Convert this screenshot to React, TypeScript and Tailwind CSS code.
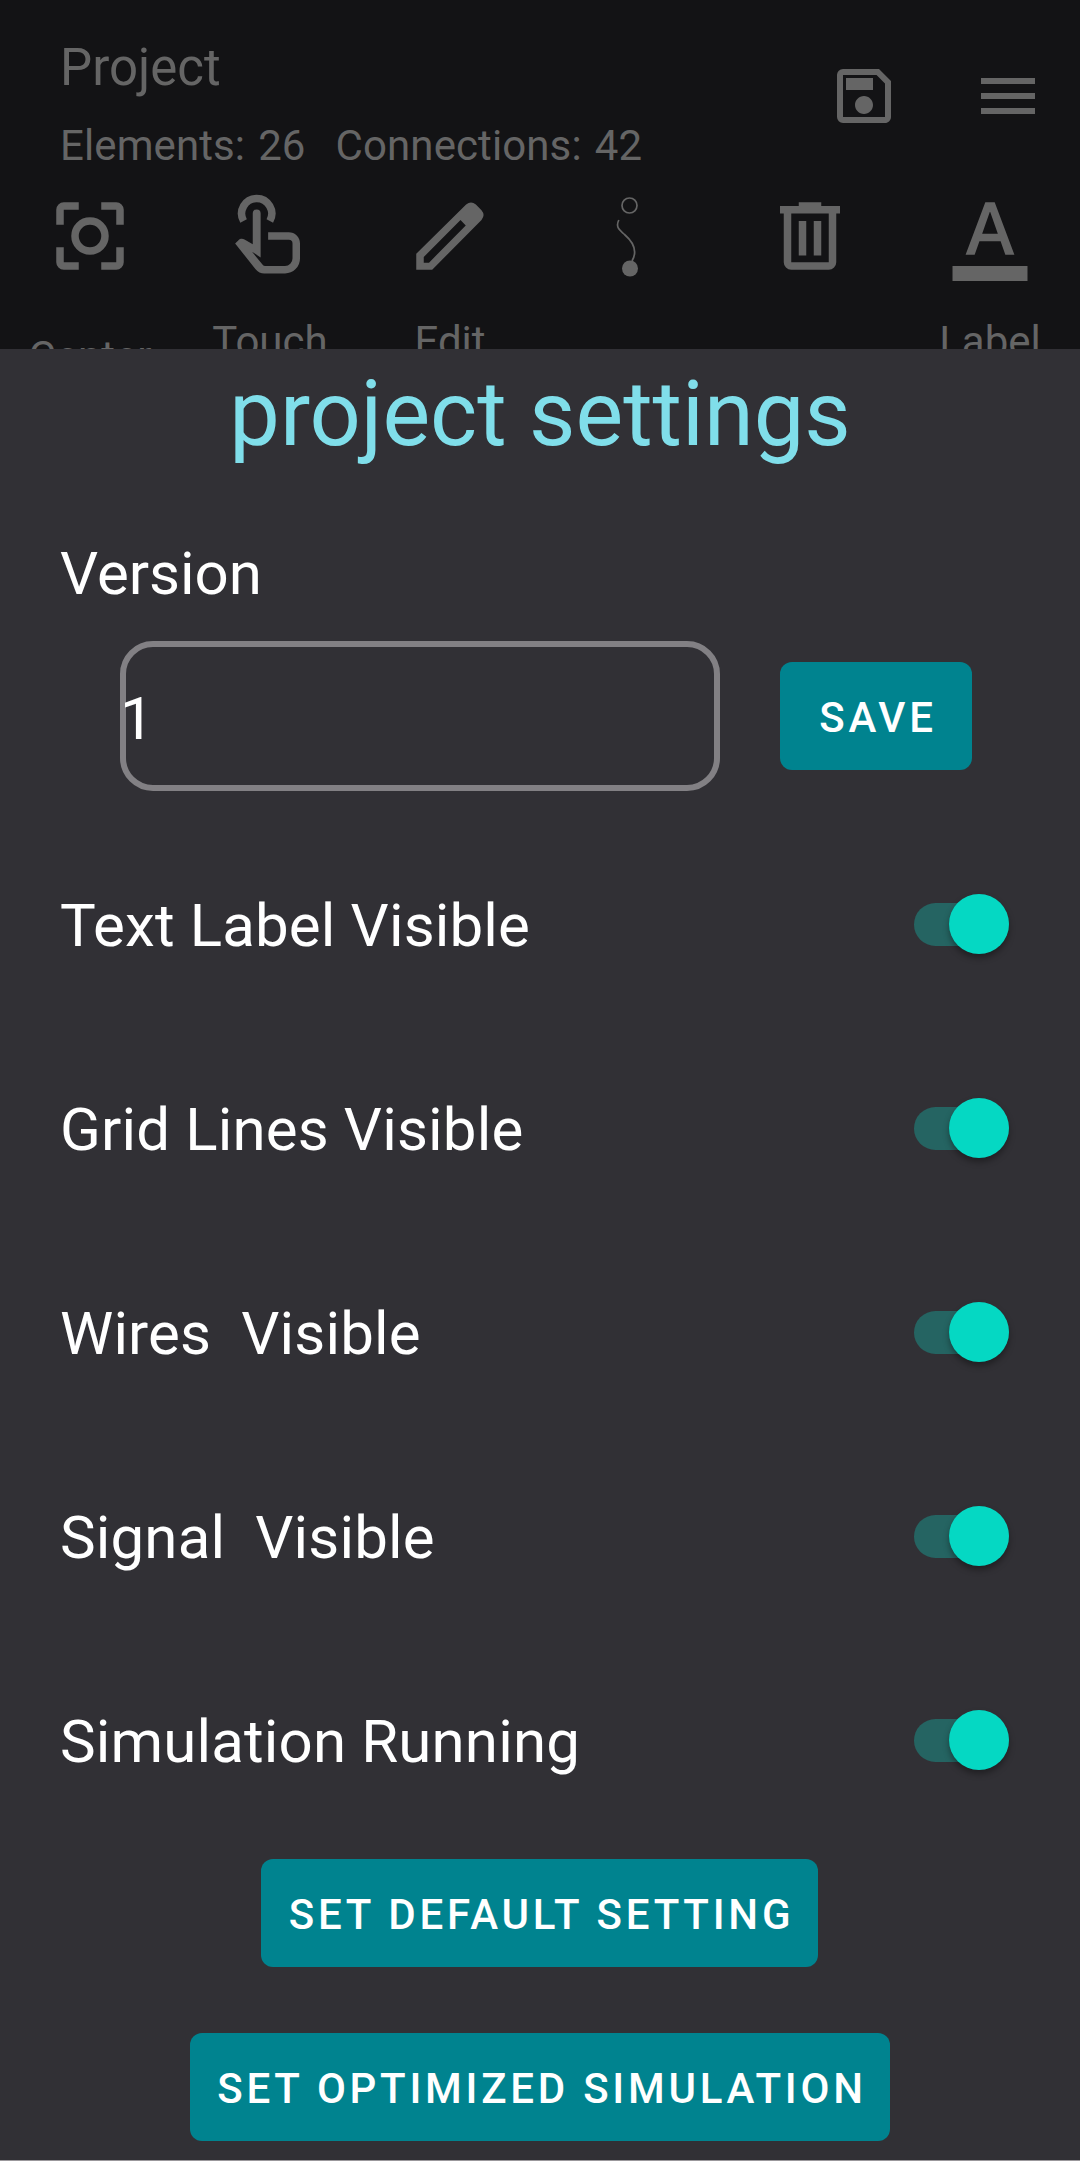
import { useState, type ReactNode } from "react";
import { MdFormatColorText, MdMenu, MdOutlineSave } from "react-icons/md";

function CenterIcon() {
  return (
    <svg viewBox="0 0 24 24" className="size-[90px]" fill="none" stroke="currentColor" strokeWidth="2">
      <path d="M4 9V5a1 1 0 0 1 1-1h4M15 4h4a1 1 0 0 1 1 1v4M20 15v4a1 1 0 0 1-1 1h-4M9 20H5a1 1 0 0 1-1-1v-4" />
      <circle cx="12" cy="12" r="4" />
    </svg>
  );
}

function TouchIcon() {
  return (
    <svg viewBox="0 0 24 24" className="size-[90px]" fill="currentColor">
      <path d="M2.7 14l.9-.9c.4-.4 1-.5 1.6-.2l2.2 1.3V6a1.05 1.05 0 0 1 2.1 0v11.7l-2.3-1.5 2.9 3.5q.2.3.6.3H16a2 2 0 0 0 2-2v-4a1 1 0 0 0-1-1h-5.5v-2H17a3 3 0 0 1 3 3v4a4 4 0 0 1-4 4h-5.5q-1.4 0-2.4-1.2z" />
      <path d="M4.95 8A4.02 4.02 0 1 1 11.95 8" fill="none" stroke="currentColor" strokeWidth="2" />
    </svg>
  );
}

function EditIcon() {
  return (
    <svg viewBox="0 0 24 24" className="size-[90px]" fill="currentColor">
      <path
        fillRule="evenodd"
        d="M3 16.75L16.3 3.6q1.3-1.1 2.6 0l1.5 1.5q1.1 1.3 0 2.6L7.25 21H3zM5 17.6v1.5h1.4l9.8-9.9-1.4-1.5z"
      />
    </svg>
  );
}

function WireIcon() {
  return (
    <svg viewBox="0 0 90 90" className="size-[90px]" fill="none" stroke="currentColor" strokeWidth="1.7">
      <circle cx="44.5" cy="14.5" r="7.5" />
      <path d="M33.8 29C30 37 35.5 39.5 39.5 43.5C47 50 53.5 59 47 70" />
      <circle cx="45" cy="77.5" r="8" fill="currentColor" stroke="none" />
    </svg>
  );
}

function TrashIcon() {
  return (
    <svg viewBox="0 0 24 24" className="size-[90px]" fill="currentColor">
      <path
        fillRule="evenodd"
        d="M9 3h6v1h5v2h-1v13a2 2 0 0 1-2 2H7a2 2 0 0 1-2-2V6H4V4h5zM7 6v13h10V6zM9 8h2v9.200H9zM13 8h2v9.200h-2z"
      />
    </svg>
  );
}

const tools: { icon: ReactNode; label: string; low?: boolean }[] = [
  { icon: <CenterIcon />, label: "Center", low: true },
  { icon: <TouchIcon />, label: "Touch" },
  { icon: <EditIcon />, label: "Edit" },
  { icon: <WireIcon />, label: "" },
  { icon: <TrashIcon />, label: "" },
  { icon: <MdFormatColorText className="size-[90px]" />, label: "Label" },
];

function Toggle({ on, onChange }: { on: boolean; onChange: () => void }) {
  return (
    <button
      role="switch"
      aria-checked={on}
      onClick={onChange}
      className="-mt-1 flex h-[60px] w-[95px] items-center rounded-full"
    >
      <span
        className={
          "flex h-[43px] w-full items-center rounded-full " +
          (on ? "justify-end bg-[#256462]" : "justify-start bg-gray-600")
        }
      >
        <span
          className={
            "size-[60px] shrink-0 rounded-full shadow-[0_4px_6px_rgba(0,0,0,0.35)] " +
            (on ? "bg-[#05d8c3]" : "bg-gray-300")
          }
        />
      </span>
    </button>
  );
}

function TealButton({ children, className }: { children: ReactNode; className: string }) {
  return (
    <button
      className={
        "h-[108px] shrink-0 rounded-xl bg-[#00838f] pt-[2px] pl-[4px] text-center text-[42px] font-medium tracking-[3.75px] whitespace-nowrap text-white " +
        className
      }
    >
      {children}
    </button>
  );
}

const labels = ["Text Label Visible", "Grid Lines Visible", "Wires  Visible", "Signal  Visible", "Simulation Running"];

export default function App() {
  const [state, setState] = useState(labels.map(() => true));

  return (
    <div className="flex h-[2161px] w-[1080px] flex-col overflow-hidden bg-[#131315] font-['Roboto',sans-serif]">
      <header className="h-[349px] shrink-0 overflow-hidden text-[#656565]">
        <div className="flex h-[191px] justify-between pr-9 pl-[60px]">
          <div className="pt-[39px]">
            <h1 className="text-[51px] leading-[58px]">Project</h1>
            <p className="mt-[24px] flex text-[42px] leading-[49px] tracking-[0.1px]">
              <span>Elements:</span>
              <span className="ml-[13px]">26</span>
              <span className="ml-[30px]">Connections:</span>
              <span className="ml-[13px]">42</span>
            </p>
          </div>
          <div className="flex gap-[72px] pt-[60px]">
            <MdOutlineSave className="size-[72px]" />
            <MdMenu className="size-[72px]" />
          </div>
        </div>
        <nav className="grid grid-cols-6">
          {tools.map((tool, i) => (
            <div key={i} className="flex flex-col items-center">
              {tool.icon}
              <span className={"text-[42px] leading-[49px] " + (tool.low ? "mt-[51px]" : "mt-9")}>
                {tool.label}
              </span>
            </div>
          ))}
        </nav>
      </header>

      <main className="flex h-[1811px] shrink-0 flex-col bg-[#313035] text-white">
        <h2 className="mt-[13px] text-center text-[90px] leading-[106px] text-[#80deea]">project settings</h2>
        <div className="mt-[71px] pl-[60px] text-[60px] leading-[70px]">Version</div>
        <div className="mt-8 flex items-center pl-[120px]">
          <div className="flex h-[150px] w-[600px] items-center rounded-[33px] border-[6px] border-[#828084]">
            <span className="-ml-1.5 pt-[5px] text-[60px] leading-[70px]">1</span>
          </div>
          <TealButton className="ml-[60px] w-48">SAVE</TealButton>
        </div>
        <div className="mt-[33px]">
          {labels.map((label, i) => (
            <div key={label} className="flex h-[204px] items-center justify-between pr-[71px] pl-[60px]">
              <span className="text-[60px] leading-[70px] tracking-[0.15px] whitespace-pre">{label}</span>
              <Toggle on={state[i]} onChange={() => setState(state.map((v, j) => (j === i ? !v : v)))} />
            </div>
          ))}
        </div>
        <div className="mt-[15px] flex flex-col items-center gap-[66px]">
          <TealButton className="mr-px w-[557px]">SET DEFAULT SETTING</TealButton>
          <TealButton className="w-[700px]">SET OPTIMIZED SIMULATION</TealButton>
        </div>
      </main>
      <div className="h-px shrink-0 bg-[#9b989c]" />
    </div>
  );
}
